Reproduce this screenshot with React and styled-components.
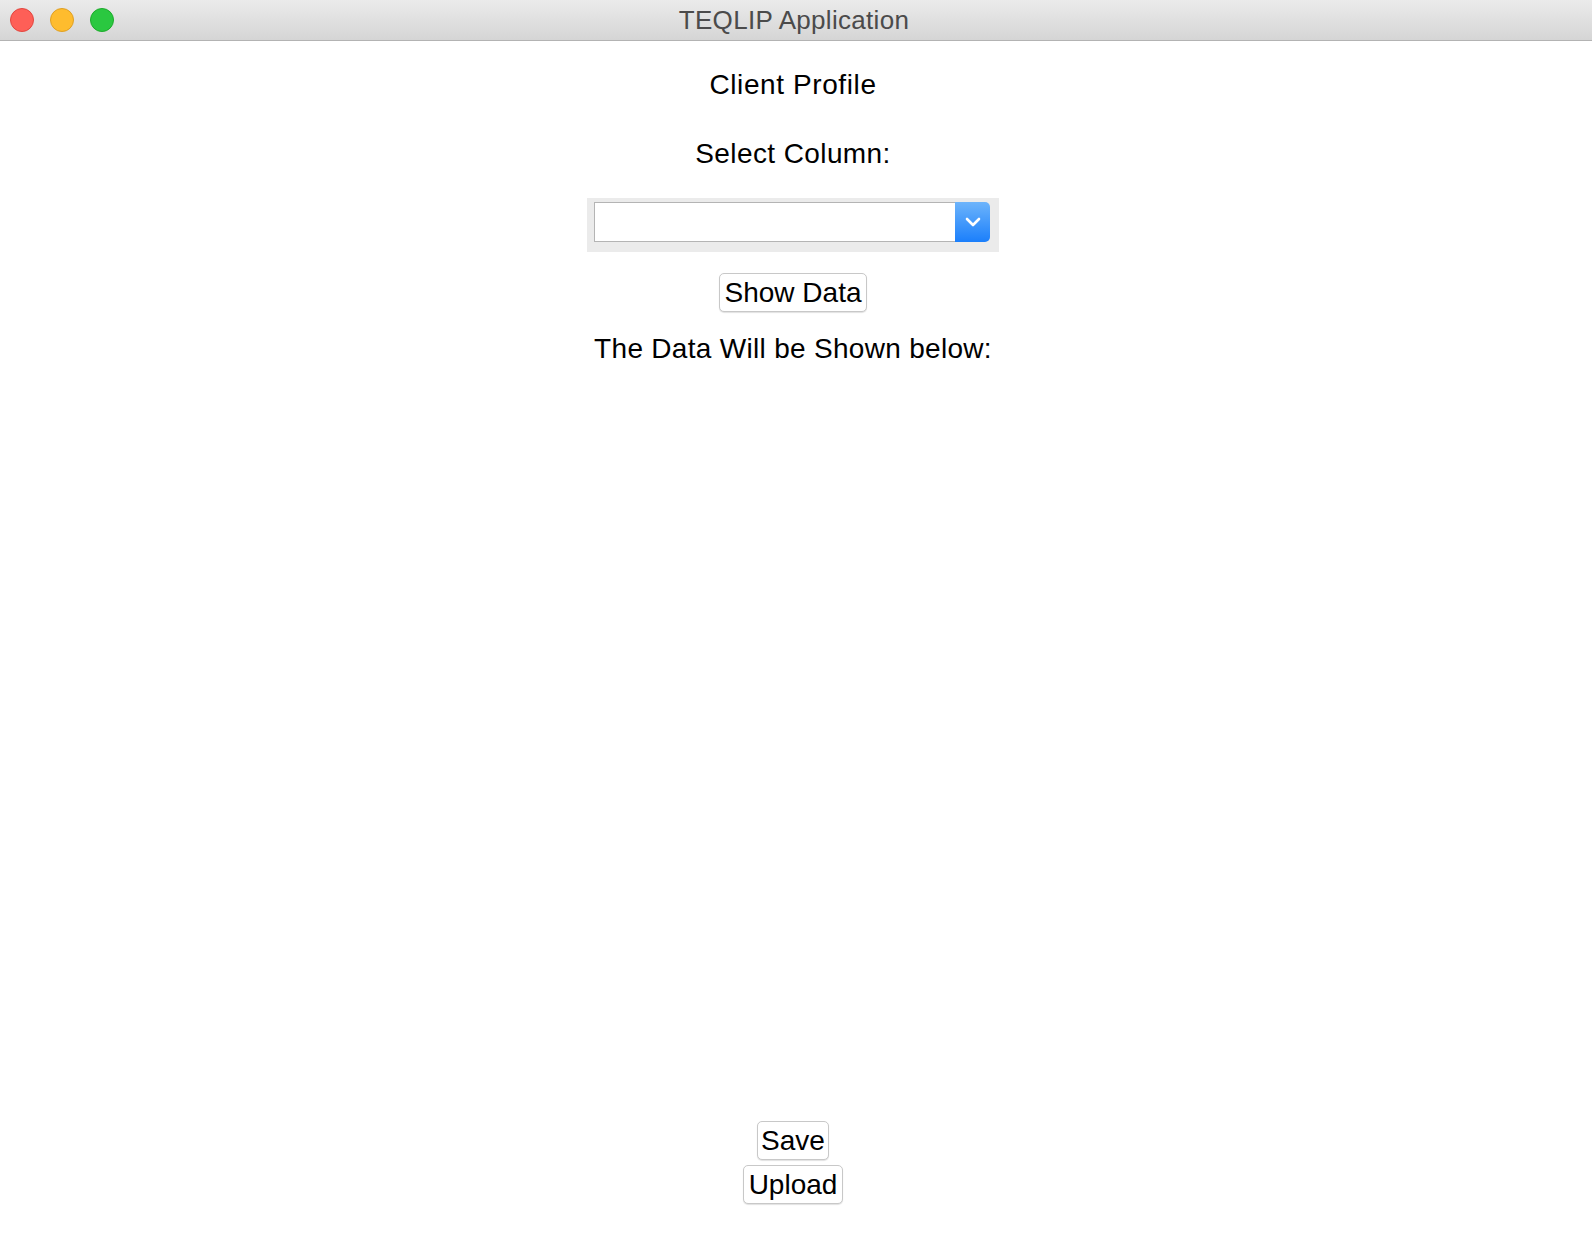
import React, { useState } from 'react';
import styled, { createGlobalStyle } from 'styled-components';

const GlobalStyle = createGlobalStyle`
  html, body {
    margin: 0;
    padding: 0;
    background: #ffffff;
  }
  body {
    font-family: 'Liberation Sans', Arial, sans-serif;
  }
`;

const Window = styled.div`
  display: flex;
  flex-direction: column;
  min-height: 100vh;
  background: #ffffff;
`;

const TitleBar = styled.div`
  position: relative;
  height: 40px;
  flex-shrink: 0;
  display: flex;
  align-items: center;
  justify-content: center;
  background: linear-gradient(to bottom, #ebebeb, #d5d5d5);
  border-bottom: 1px solid #b3b3b3;
`;

const Lights = styled.div`
  position: absolute;
  left: 10px;
  top: 8px;
  display: flex;
  gap: 16px;
`;

const Light = styled.span`
  width: 22px;
  height: 22px;
  border-radius: 50%;
  background: ${(p) => p.color};
  border: 1px solid ${(p) => p.edge};
`;

const WindowTitle = styled.div`
  font-size: 26px;
  letter-spacing: 0.3px;
  color: #4b4b4b;
  margin-right: 4px;
`;

const Content = styled.div`
  flex: 1;
  display: flex;
  flex-direction: column;
  align-items: center;
  padding: 28px 6px 32px 0;
`;

const Label = styled.div`
  font-size: 28px;
  line-height: 32px;
  letter-spacing: ${(p) => p.track || 0.3}px;
  color: #000000;
  margin-top: ${(p) => p.gap || 0}px;
`;

const ComboFrame = styled.div`
  margin-top: 28px;
  background: #ebebeb;
  padding: 4px 9px 10px 7px;
`;

const Combo = styled.div`
  display: flex;
  width: 396px;
  height: 40px;
  box-sizing: border-box;
`;

const ComboField = styled.input`
  flex: 1;
  min-width: 0;
  box-sizing: border-box;
  height: 40px;
  border: 1px solid #b4b4b4;
  border-right: none;
  background: #ffffff;
  outline: none;
  font-family: inherit;
  font-size: 24px;
  padding: 0 6px;
`;

const ComboArrow = styled.button`
  width: 35px;
  height: 40px;
  border: none;
  padding: 0;
  display: flex;
  align-items: center;
  justify-content: center;
  border-radius: 0 5px 5px 0;
  background: linear-gradient(to bottom, #6db4fb, #1b7ffb);
  cursor: pointer;
`;

const PushButton = styled.button`
  font-family: 'Liberation Sans', Arial, sans-serif;
  font-size: 28px;
  color: #000000;
  height: 39px;
  padding: 0 ${(p) => p.pad || 5}px;
  margin-top: ${(p) => p.gap || 0}px;
  background: #ffffff;
  border: 1px solid #c8c8c8;
  border-radius: 5px;
  box-shadow: 0 1px 1px rgba(0, 0, 0, 0.12);
  cursor: pointer;
`;

const Spacer = styled.div`
  flex: 1;
`;

export default function App() {
  const [column, setColumn] = useState('');

  return (
    <>
      <GlobalStyle />
      <Window>
        <TitleBar>
          <Lights>
            <Light color="#fe5f57" edge="#e2463f" />
            <Light color="#febc2e" edge="#dfa023" />
            <Light color="#2ac840" edge="#1dab2b" />
          </Lights>
          <WindowTitle>TEQLIP Application</WindowTitle>
        </TitleBar>
        <Content>
          <Label track={0.6}>Client Profile</Label>
          <Label gap={37} track={0.4}>Select Column:</Label>
          <ComboFrame>
            <Combo>
              <ComboField value={column} onChange={(e) => setColumn(e.target.value)} />
              <ComboArrow aria-label="open">
                <svg width="16" height="10" viewBox="0 0 16 10">
                  <path d="M2 2 L8 8 L14 2" fill="none" stroke="#ffffff" strokeWidth="2.6" strokeLinecap="round" strokeLinejoin="round" />
                </svg>
              </ComboArrow>
            </Combo>
          </ComboFrame>
          <PushButton gap={21}>Show Data</PushButton>
          <Label gap={21} track={0.3}>The Data Will be Shown below:</Label>
          <Spacer />
          <PushButton pad={3}>Save</PushButton>
          <PushButton gap={5} pad={5}>Upload</PushButton>
        </Content>
      </Window>
    </>
  );
}
